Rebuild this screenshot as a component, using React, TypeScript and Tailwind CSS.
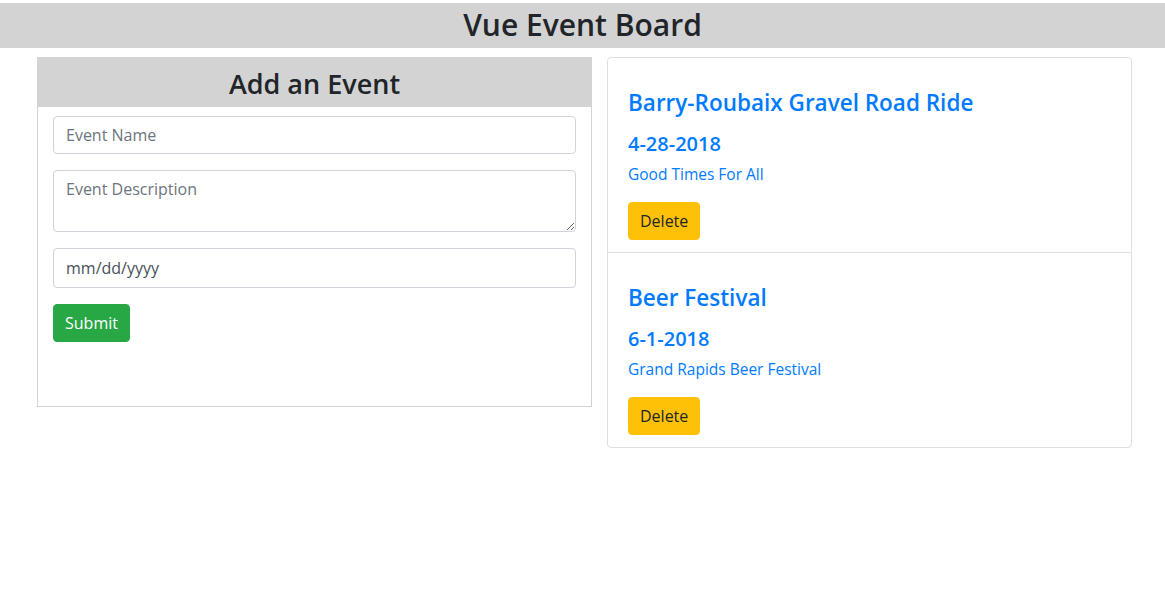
const font = { fontFamily: '"Open Sans", "Noto Sans", sans-serif' };

type EventItem = {
  name: string;
  date: string;
  description: string;
};

const events: EventItem[] = [
  {
    name: "Barry-Roubaix Gravel Road Ride",
    date: "4-28-2018",
    description: "Good Times For All",
  },
  {
    name: "Beer Festival",
    date: "6-1-2018",
    description: "Grand Rapids Beer Festival",
  },
];

const inputClass =
  "block w-full border border-[#ced4da] rounded-[4px] px-[12px] text-[16px] text-[#495057] placeholder:text-[#6c757d] outline-none bg-white";

const AddEventForm = () => {
  return (
    <div className="w-[555px] h-[350px] border border-[#d3d3d3] flex flex-col">
      <div className="h-[50px] -mx-px -mt-px bg-[#d3d3d3] flex justify-center pt-[10px]">
        <h3 className="text-[27px] leading-[34px] font-semibold text-[#212529]">
          Add an Event
        </h3>
      </div>
      <form className="flex flex-col px-[15px] pt-[9px]">
        <input
          type="text"
          className={`${inputClass} h-[38px]`}
          placeholder="Event Name"
          name="name"
        />
        <textarea
          className={`${inputClass} mt-[16px] h-[62px] py-[6px] leading-[24px]`}
          placeholder="Event Description"
          name="description"
        />
        <input
          type="text"
          className={`${inputClass} mt-[16px] h-[40px] placeholder:text-[#495057]`}
          placeholder="mm/dd/yyyy"
          name="date"
        />
        <div className="mt-[16px]">
          <button
            type="submit"
            className="bg-[#28a745] text-white text-[16px] leading-[24px] h-[38px] px-[11px] rounded-[4px] border border-[#28a745]"
          >
            Submit
          </button>
        </div>
      </form>
    </div>
  );
};

const EventList = () => {
  return (
    <div className="w-[525px] border border-[#dfdfdf] rounded-[4px] self-start">
      {events.map((event, i) => (
        <div
          key={event.name}
          className={`px-[20px] pt-[30px] pb-[12px] ${
            i > 0 ? "border-t border-[#dfdfdf]" : ""
          }`}
        >
          <h4 className="text-[22.5px] leading-[29px] font-semibold text-[#007bff]">
            {event.name}
          </h4>
          <h5 className="mt-[15px] text-[20px] leading-[24px] font-semibold text-[#007bff]">
            {event.date}
          </h5>
          <p className="mt-[6px] text-[15.5px] leading-[24px] text-[#007bff]">
            {event.description}
          </p>
          <button className="mt-[16px] bg-[#ffc107] text-[#212529] text-[16px] leading-[24px] h-[38px] px-[11px] rounded-[4px] border border-[#ffc107]">
            Delete
          </button>
        </div>
      ))}
    </div>
  );
};

export default function App() {
  return (
    <div className="min-h-[611px] bg-white pt-[3px]" style={font}>
      <div className="h-[45px] bg-[#d3d3d3] flex justify-center pt-[3px]">
        <h1 className="text-[30px] leading-[38px] font-semibold text-[#212529]">
          Vue Event Board
        </h1>
      </div>
      <div className="flex gap-[15px] pl-[37px] mt-[9px]">
        <AddEventForm />
        <EventList />
      </div>
    </div>
  );
}
